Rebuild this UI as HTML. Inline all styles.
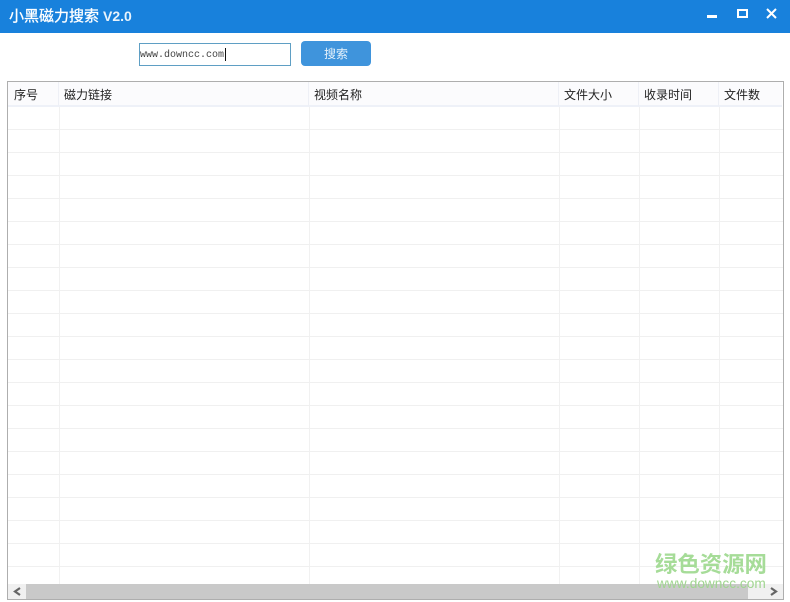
<!DOCTYPE html>
<html>
<head>
<meta charset="utf-8">
<style>
html,body{margin:0;padding:0;background:#fff}
body{width:790px;height:602px;position:relative;overflow:hidden;font-family:"Liberation Sans","Noto Sans CJK SC","WenQuanYi Zen Hei",sans-serif}
div{position:absolute;box-sizing:border-box}
.bar{left:0;top:0;width:790px;height:33px;background:#1881dc}
.title{left:9px;top:7px;color:#fff;font-size:15px;line-height:18px;-webkit-text-stroke:.3px #fff;font-family:"WenQuanYi Zen Hei","Noto Sans CJK SC",sans-serif;white-space:nowrap}
.ver{left:103px;top:7px;color:#e8f3fc;font:bold 14px/18px "Liberation Sans",sans-serif;white-space:nowrap}
.input{left:139px;top:43px;width:152px;height:23px;border:1px solid #5f9fc4;background:#fff}
.input span{position:absolute;left:0;top:5px;font:10px/14px "Liberation Mono",monospace;color:#444;white-space:nowrap}
.caret{left:85px;top:4px;width:1px;height:13px;background:#111}
.btn{left:301px;top:41px;width:70px;height:25px;background:#3f94dc;border-radius:4px;color:#e6f2fb;text-align:center;font-size:12px;line-height:25px;font-family:"WenQuanYi Zen Hei","Noto Sans CJK SC",sans-serif}
.frame{left:7px;top:81px;width:777px;height:519px;border:1px solid #aeaeae;overflow:hidden}
.head{left:0;top:0;width:774px;height:25px;background:#fbfbfd;border-bottom:2px solid #eef1f8}
.th{top:5px;font-size:12px;line-height:16px;color:#222;white-space:nowrap;font-family:"WenQuanYi Zen Hei","Noto Sans CJK SC",sans-serif}
.hl{top:0;width:1px;height:24px;background:#eef0f6}
.v{top:25px;width:1px;height:478px;background:#f1f1f1}
.r{left:0;width:775px;height:1px;background:#f0f0f0}
.sb{left:0;top:502px;width:775px;height:15px;background:#f0f0f0}
.thumb{left:18px;top:0;width:722px;height:15px;background:#c9c9c9}
.wm1{left:655px;top:548px;font-size:22.4px;line-height:30px;font-weight:bold;color:#a6dc98;white-space:nowrap;font-family:"Noto Sans CJK SC",sans-serif}
.wm2{left:657px;top:576px;font-size:13.700px;line-height:16px;color:#a0d590;white-space:nowrap}
svg{position:absolute}
</style>
</head>
<body>
<div class="bar"></div>
<div class="title">小黑磁力搜索</div>
<div class="ver">V2.0</div>
<svg style="left:700px;top:4px" width="85" height="20" viewBox="0 0 85 20">
<rect x="7" y="11" width="10" height="3" fill="#fff"/>
<rect x="38" y="6" width="9" height="7" fill="none" stroke="#fff" stroke-width="2"/>
<path d="M67 5L76 14M76 5L67 14" stroke="#fff" stroke-width="2" fill="none"/>
</svg>
<div class="input"><span>www.downcc.com</span><div class="caret"></div></div>
<div class="btn">搜索</div>
<div class="frame">
<div class="head"></div>
<div class="th" style="left:6px">序号</div>
<div class="th" style="left:56px">磁力链接</div>
<div class="th" style="left:306px">视频名称</div>
<div class="th" style="left:556px">文件大小</div>
<div class="th" style="left:636px">收录时间</div>
<div class="th" style="left:716px">文件数</div>
<div class="hl" style="left:50px"></div><div class="hl" style="left:300px"></div><div class="hl" style="left:550px"></div><div class="hl" style="left:630px"></div><div class="hl" style="left:710px"></div>
<div class="v" style="left:51px"></div><div class="v" style="left:301px"></div><div class="v" style="left:551px"></div><div class="v" style="left:631px"></div><div class="v" style="left:711px"></div>
<div class="r" style="top:47px"></div><div class="r" style="top:70px"></div><div class="r" style="top:93px"></div><div class="r" style="top:116px"></div><div class="r" style="top:139px"></div><div class="r" style="top:162px"></div><div class="r" style="top:185px"></div><div class="r" style="top:208px"></div><div class="r" style="top:231px"></div><div class="r" style="top:254px"></div><div class="r" style="top:277px"></div><div class="r" style="top:300px"></div><div class="r" style="top:323px"></div><div class="r" style="top:346px"></div><div class="r" style="top:369px"></div><div class="r" style="top:392px"></div><div class="r" style="top:415px"></div><div class="r" style="top:438px"></div><div class="r" style="top:461px"></div><div class="r" style="top:484px"></div>
<div class="sb">
<div class="thumb"></div>
<svg style="left:5px;top:3px" width="8" height="9" viewBox="0 0 8 9"><path d="M7 1L2 4.500L7 8" fill="none" stroke="#666" stroke-width="2.200"/></svg>
<svg style="left:762px;top:3px" width="8" height="9" viewBox="0 0 8 9"><path d="M1 1L6 4.500L1 8" fill="none" stroke="#666" stroke-width="2.200"/></svg>
</div>
</div>
<div class="wm1">绿色资源网</div>
<div class="wm2">www.downcc.com</div>
</body>
</html>
